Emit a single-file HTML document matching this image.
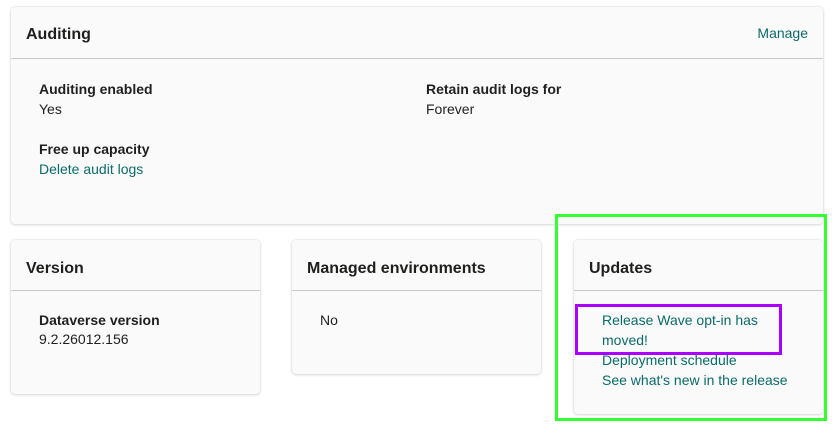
<!DOCTYPE html>
<html><head><style>
body{margin:0;width:832px;height:424px;background:#fff;font-family:"Liberation Sans",sans-serif;position:relative;overflow:hidden;color:#201f1e}
.card{position:absolute;background:#fafafa;border-radius:4px;box-shadow:0 0 2px rgba(0,0,0,.14),0 1px 3px rgba(0,0,0,.12)}
.hd{position:absolute;left:0;right:0;top:0;border-bottom:1px solid #c8c8c8;font-weight:bold;font-size:16px}
.hd span{position:absolute;left:15px}
.l{position:absolute;font-size:14px;white-space:nowrap}
.b{font-weight:bold}
.a{color:#0b6a6a}
</style></head><body>
<div class="card" style="left:11px;top:7px;width:812px;height:217px">
 <div class="hd" style="height:51px"><span style="top:19px">Auditing</span></div>
 <div class="l a" style="right:15px;top:18px">Manage</div>
 <div class="l b" style="left:28px;top:74px">Auditing enabled</div>
 <div class="l" style="left:28px;top:94px">Yes</div>
 <div class="l b" style="left:415px;top:74px">Retain audit logs for</div>
 <div class="l" style="left:415px;top:94px">Forever</div>
 <div class="l b" style="left:28px;top:134px">Free up capacity</div>
 <div class="l a" style="left:28px;top:154px">Delete audit logs</div>
</div>
<div class="card" style="left:11px;top:240px;width:249px;height:154px">
 <div class="hd" style="height:50px"><span style="top:20px">Version</span></div>
 <div class="l b" style="left:28px;top:72px">Dataverse version</div>
 <div class="l" style="left:28px;top:91px">9.2.26012.156</div>
</div>
<div class="card" style="left:292px;top:240px;width:249px;height:134px">
 <div class="hd" style="height:50px"><span style="top:20px">Managed environments</span></div>
 <div class="l" style="left:28px;top:72px">No</div>
</div>
<div class="card" style="left:574px;top:240px;width:249px;height:174px">
 <div class="hd" style="height:50px"><span style="top:20px">Updates</span></div>
 <div class="l a" style="left:28px;top:70px;line-height:20px">Release Wave opt-in has<br>moved!<br>Deployment schedule<br>See what's new in the release</div>
</div>
<div style="position:absolute;left:555px;top:214px;width:266px;height:201px;border:3px solid #33ff33"></div>
<div style="position:absolute;left:575px;top:304px;width:201px;height:45px;border:3px solid #aa00ff"></div>
</body></html>
